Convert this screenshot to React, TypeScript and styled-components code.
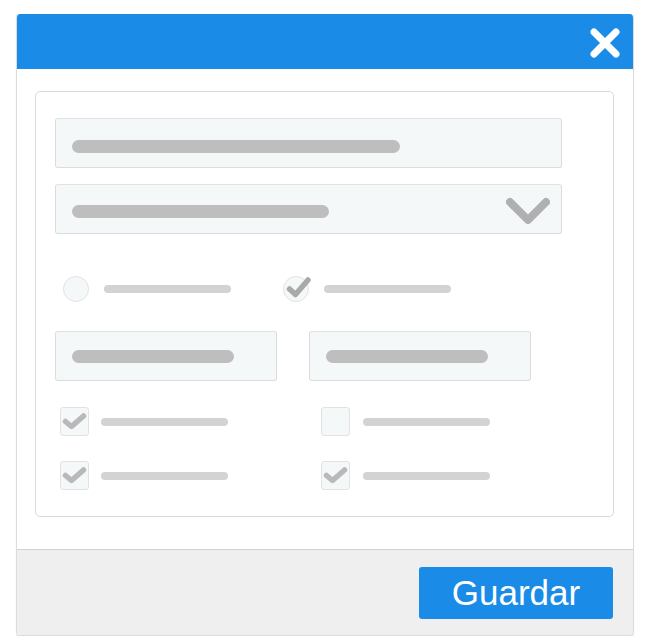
import React from "react";
import styled, { createGlobalStyle } from "styled-components";

const Global = createGlobalStyle`
  html, body { margin: 0; padding: 0; background: #ffffff; }
  body { font-family: "Liberation Sans", Arial, sans-serif; }
`;

const BLUE = "#1a8ce8";

const Page = styled.div`
  padding: 14px 0 0 16px;
`;

const Dialog = styled.div`
  width: 618px;
  box-sizing: border-box;
  border: 1px solid #dcdcdc;
  border-top: 0;
  border-radius: 4px;
  overflow: hidden;
  box-shadow: 0 1px 1px rgba(0, 0, 0, 0.12);
  display: flex;
  flex-direction: column;
`;

const Header = styled.div`
  height: 55px;
  background: ${BLUE};
  display: flex;
  align-items: center;
  justify-content: flex-end;
  padding-right: 14px;
  margin: 0 -1px;
`;

const CloseButton = styled.button`
  border: 0;
  background: transparent;
  padding: 0;
  width: 30px;
  height: 30px;
  margin-top: 2px;
  display: flex;
  align-items: center;
  justify-content: center;
  cursor: pointer;
`;

const Body = styled.div`
  background: #ffffff;
  padding: 22px 19px 32px 18px;
`;

const Card = styled.div`
  border: 1px solid #d9d9d9;
  border-radius: 5px;
  padding: 26px 19px 26px 19px;
  display: flex;
  flex-direction: column;
`;

const Field = styled.div<{ $width: number; $top: number; $mt?: number }>`
  box-sizing: border-box;
  width: ${(p) => p.$width}px;
  height: 50px;
  margin-top: ${(p) => p.$mt ?? 0}px;
  background: #f5f8f9;
  border: 1px solid #dcdcdc;
  border-top-color: #e2e2e2;
  border-radius: 3px;
  padding: ${(p) => p.$top}px 11px 0 16px;
  display: flex;
  align-items: flex-start;
  justify-content: space-between;
`;

const SelectField = styled(Field)`
  padding-top: 0;
  align-items: center;
`;

const Bar = styled.div<{ $width: number }>`
  width: ${(p) => p.$width}px;
  height: 13px;
  border-radius: 7px;
  background: #bebebe;
`;

const SelectBar = styled(Bar)`
  margin-top: 4px;
`;

const Label = styled.div<{ $width?: number }>`
  width: ${(p) => p.$width ?? 127}px;
  height: 8px;
  border-radius: 4px;
  background: #d3d3d3;
`;

const Row = styled.div<{ $mt: number; $pl?: number }>`
  display: flex;
  align-items: center;
  margin-top: ${(p) => p.$mt}px;
  padding-left: ${(p) => p.$pl ?? 0}px;
`;

const Option = styled.div<{ $width: number; $gap: number }>`
  width: ${(p) => p.$width}px;
  display: flex;
  align-items: center;
  gap: ${(p) => p.$gap}px;
`;

const Radio = styled.div`
  position: relative;
  box-sizing: border-box;
  width: 26px;
  height: 26px;
  border-radius: 50%;
  background: #f5f8f9;
  border: 1px solid #e2e2e2;
  flex: none;
`;

const Box = styled.div`
  position: relative;
  box-sizing: border-box;
  width: 29px;
  height: 29px;
  border-radius: 3px;
  background: #f5f8f9;
  border: 1px solid #e2e2e2;
  flex: none;
`;

const Tick = styled.svg`
  position: absolute;
  left: -1px;
  top: -1px;
  overflow: visible;
`;

const Chevron = styled.svg`
  margin-top: 6px;
  flex: none;
`;

const FieldPair = styled.div`
  display: flex;
  gap: 32px;
  margin-top: 29px;
`;

const Footer = styled.div`
  background: #efefef;
  border-top: 1px solid #d2d2d2;
  padding: 17px 20px 16px 0;
  display: flex;
  justify-content: flex-end;
`;

const SaveButton = styled.button`
  width: 194px;
  height: 52px;
  border: 0;
  border-radius: 3px;
  background: ${BLUE};
  color: #ffffff;
  font-family: "Liberation Sans", Arial, sans-serif;
  font-size: 35px;
  line-height: 52px;
  padding: 0;
  cursor: pointer;
`;

const CircleCheck = () => (
  <Radio>
    <Tick width="26" height="26" viewBox="0 0 26 26">
      <path d="M6.5 13 L12.5 18.5 L25 4" fill="none" stroke="#a9a9a9" strokeWidth="5.5" strokeLinecap="round" strokeLinejoin="round" />
    </Tick>
  </Radio>
);

const CheckBox = ({ checked }: { checked: boolean }) => (
  <Box>
    {checked && (
      <Tick width="29" height="29" viewBox="0 0 29 29">
        <path d="M5.5 14.5 L11.5 19.5 L23.5 9" fill="none" stroke="#b9b9b9" strokeWidth="5.5" strokeLinecap="round" strokeLinejoin="round" />
      </Tick>
    )}
  </Box>
);

export default function App() {
  return (
    <>
      <Global />
      <Page>
        <Dialog>
          <Header>
            <CloseButton aria-label="Cerrar">
              <svg width="30" height="30" viewBox="0 0 30 30">
                <path d="M4 4 L26 26 M26 4 L4 26" stroke="#ffffff" strokeWidth="7" strokeLinecap="round" />
              </svg>
            </CloseButton>
          </Header>
          <Body>
            <Card>
              <Field $width={507} $top={21}>
                <Bar $width={328} />
              </Field>
              <SelectField $width={507} $top={0} $mt={16}>
                <SelectBar $width={257} />
                <Chevron width="44" height="30" viewBox="0 0 44 30">
                  <path d="M4 5 L22 23 L40 5" fill="none" stroke="#b0b0b0" strokeWidth="8" strokeLinecap="round" strokeLinejoin="round" />
                </Chevron>
              </SelectField>
              <Row $mt={42} $pl={8}>
                <Option $width={220} $gap={15}>
                  <Radio />
                  <Label />
                </Option>
                <Option $width={220} $gap={15}>
                  <CircleCheck />
                  <Label />
                </Option>
              </Row>
              <FieldPair>
                <Field $width={222} $top={18}>
                  <Bar $width={162} />
                </Field>
                <Field $width={222} $top={18}>
                  <Bar $width={162} />
                </Field>
              </FieldPair>
              <Row $mt={26} $pl={5}>
                <Option $width={261} $gap={12}>
                  <CheckBox checked />
                  <Label />
                </Option>
                <Option $width={261} $gap={13}>
                  <CheckBox checked={false} />
                  <Label />
                </Option>
              </Row>
              <Row $mt={25} $pl={5}>
                <Option $width={261} $gap={12}>
                  <CheckBox checked />
                  <Label />
                </Option>
                <Option $width={261} $gap={13}>
                  <CheckBox checked />
                  <Label />
                </Option>
              </Row>
            </Card>
          </Body>
          <Footer>
            <SaveButton>Guardar</SaveButton>
          </Footer>
        </Dialog>
      </Page>
    </>
  );
}
